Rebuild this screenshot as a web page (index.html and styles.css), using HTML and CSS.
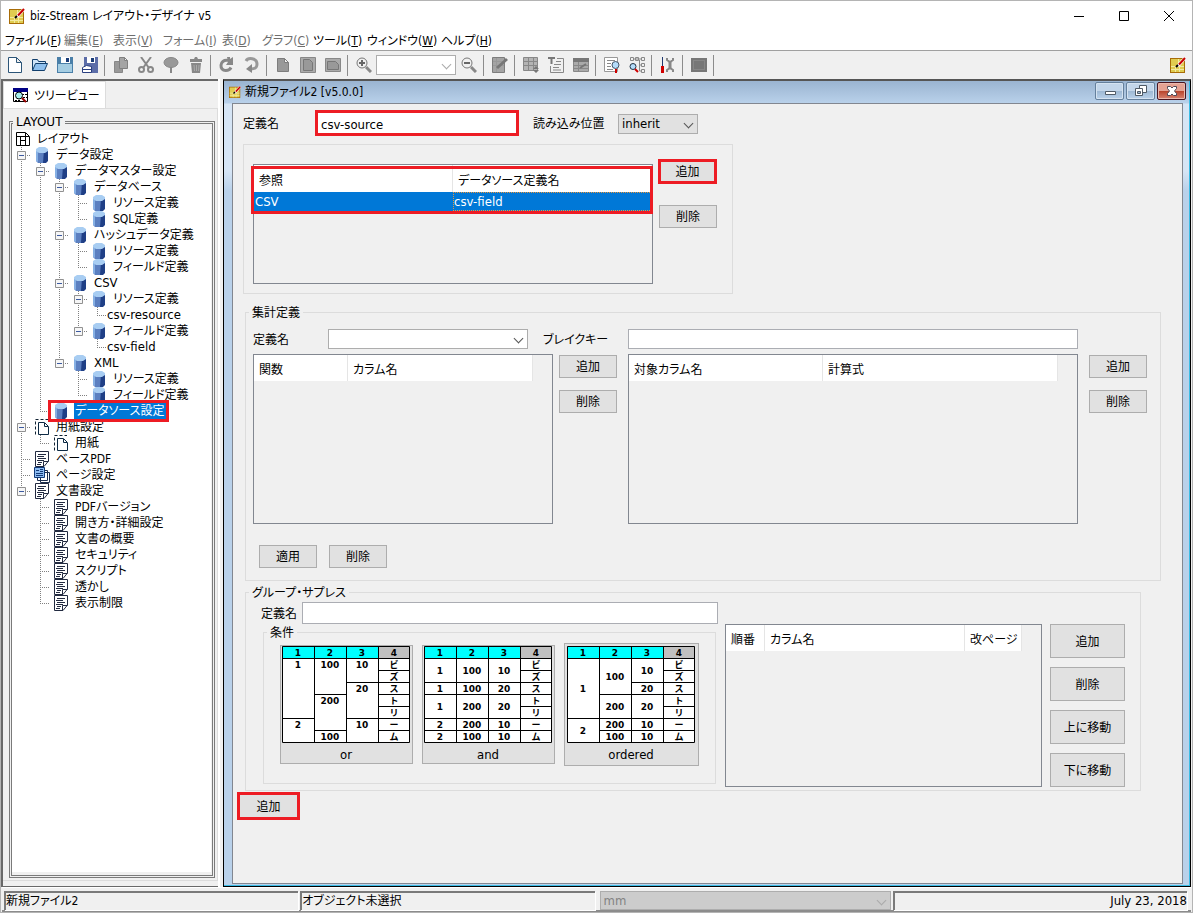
FILE: index.html
```
<!DOCTYPE html>
<html lang="ja">
<head>
	<title>biz-Stream レイアウト・デザイナ v5</title>
	<meta charset="utf-8">
	<link rel="stylesheet" href="styles.css">
</head>
<body>
<!--Icons used more than once-->
<svg class="defs" width="0" height="0">
	<symbol id="app" viewBox="0 0 16 16">
		<path fill="#a86c08" d="M0 1h15v15H0z"/>
		<path fill="#e0cc50" d="M1 2h13v13H1z"/>
		<path fill="none" stroke="#f2eaa0" d="M1 9.5h13M5.500 9v6M9.500 10v5M8.500 2v7M1 12.500h13"/>
		<path fill="#fff" d="M7 10l1-4 6-6 2 2-6 7z"/>
		<path stroke="#c80000" stroke-width="2" d="M9 7.500L15 1"/>
		<path stroke="#000" stroke-width="2" d="M6 10l2-2"/>
	</symbol>
	<symbol id="db" viewBox="0 0 12 16">
		<path fill="#5b7fc0" d="M0 3h8v13H2l-2-2z"/>
		<path fill="#1f3f86" d="M8 3h4v11l-2 2H7z"/>
		<path fill="#86b0e4" d="M0 3h2v12l-2-1z"/>
		<path fill="#a8cdf2" d="M3 0h6l3 2v2L9 6H3L0 4V2z"/>
	</symbol>
	<symbol id="doc" viewBox="0 0 14 16">
		<path fill="#fff" stroke="#222a40" d="M.5.5h13V10L9 15.500H.5z"/>
		<path fill="none" stroke="#222a40" d="M3 3.500h8M2 5.500h7M3 7.500h8M2 9.500h7M3 11.500h4M2 13.500h4M8.500 15v-4.500h5"/>
	</symbol>
	<symbol id="paper" viewBox="0 0 14 16">
		<path fill="none" stroke="#123" stroke-dasharray="3 2" d="M.5 15.500V.5H13"/>
		<path fill="#fff" stroke="#0d2a44" d="M3.500 3.500h6l4 4v8h-10zM9.500 4v3.500H13"/>
	</symbol>
	<symbol id="pages" viewBox="0 0 16 16">
		<path fill="#fff" stroke="#1a2c4c" d="M6.500 5.500h9v10h-9zM3.500 3.500h10v10h-10z"/>
		<path fill="#8dbcf2" stroke="#123a78" d="M.5.500h10v10H.5z"/>
		<path stroke="#123a78" d="M2 3.500h3M6 2.500h3M6 4.500h3M2 6.500h7M2 8.500h7"/>
	</symbol>
	<symbol id="layout" viewBox="0 0 14 14">
		<path fill="#fff" stroke="#000" d="M.5.5h9l4 4v9H.5z"/>
		<path fill="none" stroke="#000" d="M1 4.500h12M4.500 4.500V13M9.500 1v12M4.500 8.500h5"/>
	</symbol>
	<symbol id="minus" viewBox="0 0 9 9">
		<path fill="#f6f6f6" stroke="#919191" d="M.5.5h8v8h-8z"/>
		<path stroke="#3c5aa0" d="M2 4.500h5"/>
	</symbol>
	<symbol id="zoomin" viewBox="0 0 16 16">
		<circle cx="6" cy="6" r="5" fill="#f0f0f0" stroke="#777"/>
		<path stroke="#666" stroke-width="2" d="M3 6h6M6 3v6"/>
		<path stroke="#888" stroke-width="3" d="M10 10l5 5"/>
	</symbol>
	<symbol id="zoomout" viewBox="0 0 16 16">
		<circle cx="6" cy="6" r="5" fill="#f0f0f0" stroke="#777"/>
		<path stroke="#666" stroke-width="2" d="M3 6h6"/>
		<path stroke="#888" stroke-width="3" d="M10 10l5 5"/>
	</symbol>
</svg>

<!--Title bar-->
<header class="titlebar">
	<svg class="app"><use href="#app"/></svg>
	<span class="title">biz-Stream レイアウト・デザイナ v5</span>
	<button class="win" aria-label="最小化"><svg viewBox="0 0 10 10"><path stroke="#000" d="M0 5.500h10"/></svg></button>
	<button class="win" aria-label="最大化"><svg viewBox="0 0 10 10"><path fill="none" stroke="#000" d="M.5.5h9v9h-9z"/></svg></button>
	<button class="win" aria-label="閉じる"><svg viewBox="0 0 10 10"><path stroke="#000" d="M0 0l10 10M10 0L0 10"/></svg></button>
</header>

<!--Menu-->
<nav class="menu">
	<a href="#">ファイル(<u>F</u>)</a>
	<a href="#" class="off">編集(<u>E</u>)</a>
	<a href="#" class="off">表示(<u>V</u>)</a>
	<a href="#" class="off">フォーム(<u>I</u>)</a>
	<a href="#" class="off">表(<u>D</u>)</a>
	<a href="#" class="off">グラフ(<u>C</u>)</a>
	<a href="#">ツール(<u>T</u>)</a>
	<a href="#">ウィンドウ(<u>W</u>)</a>
	<a href="#">ヘルプ(<u>H</u>)</a>
</nav>

<!--Toolbar-->
<div class="toolbar">
	<button aria-label="新規"><svg viewBox="0 0 16 16"><path fill="#fff" stroke="#2c5578" d="M1.500.5h8l5 5v10h-13zM9.500.500v5h5"/></svg></button>
	<button aria-label="開く"><svg viewBox="0 0 16 16"><path fill="#cfe4f8" stroke="#123f6c" d="M.5 13.500v-11h5l1 2h7v2"/><path fill="#8fc0ee" stroke="#123f6c" d="M.5 13.500l3-7h12l-3 7z"/></svg></button>
	<button aria-label="保存"><svg viewBox="0 0 16 16"><path fill="#4a7fa8" d="M0 0h16v16H0z"/><path fill="#a5cde2" d="M1 7h14v8H1z"/><path fill="#fff" d="M4 0h9v6H4z"/><path fill="#1b3d78" d="M9 1h3v4H9z"/></svg></button>
	<button aria-label="すべて保存"><svg viewBox="0 0 16 16"><path fill="#5c6da8" d="M2 0h14v16H2z"/><path fill="#fff" d="M5 0h8v6H5z"/><path fill="#1b3d78" d="M9 1h3v4H9z"/><path fill="#fff" stroke="#2a3f80" d="M.5 10.500l4-2 5 1v6h-9zM1 12.500h8"/></svg></button>
	<i></i>
	<button aria-label="コピー"><svg viewBox="0 0 16 16"><path fill="#999" stroke="#888" d="M1.500 4.500h8v11h-8z"/><path fill="#a4a4a4" stroke="#808080" d="M6.500.500h5l3 3v8h-8zM11.500.500v3h3"/></svg></button>
	<button aria-label="切り取り"><svg viewBox="0 0 16 16"><path fill="none" stroke="#888" stroke-width="2" d="M3 0l8 11M13 0L5 11"/><circle cx="3.500" cy="12.500" r="2.500" fill="none" stroke="#888" stroke-width="2"/><circle cx="12.500" cy="12.500" r="2.500" fill="none" stroke="#888" stroke-width="2"/></svg></button>
	<button aria-label="吹き出し"><svg viewBox="0 0 16 16"><ellipse cx="8" cy="5.500" rx="7" ry="5" fill="#999" stroke="#888"/><path stroke="#888" stroke-width="2" d="M8 10v6"/></svg></button>
	<button aria-label="削除"><svg viewBox="0 0 16 16"><path fill="#888" d="M2 2h4l1-2h2l1 2h4v3H2zM3 6h10l-1 10H4z"/><path stroke="#aaa" d="M6 8l.5 6M8.500 8v6M11 8l-.5 6"/></svg></button>
	<i></i>
	<button aria-label="元に戻す"><svg viewBox="0 0 16 16"><path fill="none" stroke="#888" stroke-width="3" d="M9 3.500C0 2 0 14 7 13.500c3 0 4-1 5-3"/><path fill="#888" d="M8 0h3v2l3-2v8H7l2-3z"/></svg></button>
	<button aria-label="やり直し"><svg viewBox="0 0 16 16"><path fill="none" stroke="#999" stroke-width="3" d="M2 4c2-4 11-3 11 3 0 4-2 5-6 5"/><path fill="#888" d="M8 7v9l-6-4z"/></svg></button>
	<i></i>
	<button aria-label="ページ"><svg viewBox="0 0 16 16"><path fill="#999" stroke="#7d7d7d" d="M2.500 1.500h7l4 4v9h-11zM9.500 1.500v4h4"/></svg></button>
	<button aria-label="縦"><svg viewBox="0 0 16 16"><path fill="#aaa" stroke="#888" d="M.5.500h15v15H.5z"/><path fill="#999" stroke="#777" d="M3.500 2.500h6l3 3v8h-9z"/></svg></button>
	<button aria-label="横"><svg viewBox="0 0 16 16"><path fill="#aaa" stroke="#888" d="M.5 1.500h15v13H.5z"/><path fill="#999" stroke="#777" d="M2.500 4.500h8l3 3v5h-11z"/></svg></button>
	<i></i>
	<button aria-label="拡大"><svg><use href="#zoomin"/></svg></button>
	<span class="pick zoom"><select aria-label="倍率"><option></option></select></span>
	<button aria-label="縮小"><svg><use href="#zoomout"/></svg></button>
	<i></i>
	<button aria-label="編集"><svg viewBox="0 0 16 16"><path fill="#a4a4a4" stroke="#7d7d7d" d="M.5.500h12v15H.5z"/><path stroke="#999" d="M1 4.500h11M1 8.500h11M4.500 1v14"/><path stroke="#777" stroke-width="3" d="M5 11l10-9"/></svg></button>
	<i></i>
	<button aria-label="表"><svg viewBox="0 0 16 16"><path fill="#b4b4b4" stroke="#888" d="M.5.500h14v13H.5z"/><path stroke="#888" d="M1 4.500h13M1 8.500h13M5.500 1v12M10.500 1v12"/><path fill="#777" d="M10 12l3-3 3 3zM10 13h6l-3 3z"/></svg></button>
	<button aria-label="テキスト"><svg viewBox="0 0 16 16"><path stroke="#777" stroke-width="2" d="M0 1h7M3.500 1v6"/><path fill="none" stroke="#888" d="M9 1.500h6.500v14h-13V9M8 4.500h5M6 7.500h7M5 10.500h6M5 13h8"/></svg></button>
	<button aria-label="フォーム"><svg viewBox="0 0 16 16"><path fill="#aaa" stroke="#888" d="M.5 1.500h15v13H.5z"/><path fill="#777" d="M0 1h16v4H0z"/><path stroke="#888" d="M1 8.500h14M1 11.500h14M5.500 5v9"/><path stroke="#777" stroke-width="2" d="M7 11l6-4"/></svg></button>
	<i></i>
	<button aria-label="検索"><svg viewBox="0 0 16 16"><path fill="#fff" stroke="#999" d="M.5.500h13v14H.5z"/><path stroke="#888" d="M3 3.500h8M3 6.500h4M3 9.500h4M3 12.500h6"/><circle cx="11.500" cy="8" r="3.500" fill="#b4dcfa" stroke="#456"/><path stroke="#d00000" stroke-width="2" d="M12 12v4"/></svg></button>
	<button aria-label="ツリー検索"><svg viewBox="0 0 16 16"><path fill="none" stroke="#888" d="M1.500.500h3v3h-3zM6.500.500h3v3h-3zM12.500.500h3v3h-3zM12.500 6.500h3v3h-3zM12.500 12.500h3v3h-3zM4 2h8M10.500 3v5h2M10.500 8v6h2"/><circle cx="4" cy="9.500" r="3" fill="#b4dcfa" stroke="#234"/><path stroke="#d00000" stroke-width="2" d="M6 12l3 3"/></svg></button>
	<i></i>
	<button aria-label="設定"><svg viewBox="0 0 16 16"><path stroke="#223a70" d="M2.500 0v9"/><path stroke="#d00000" stroke-width="3" d="M2.500 9v7"/><path fill="none" stroke="#888" stroke-width="2" d="M7 1v2l3 2 3-2V1M7 15v-2l3-2 3 2v2"/><path stroke="#888" stroke-width="3" d="M10 4v8"/></svg></button>
	<i></i>
	<button aria-label="表示"><svg viewBox="0 0 16 16"><path fill="#777" d="M0 1h16v14H0z"/><path fill="none" stroke="#999" stroke-dasharray="1 1" d="M2.500 3.500h11v9h-11z"/></svg></button>
	<i></i>
	<svg class="app"><use href="#app"/></svg>
</div>

<div class="workspace">
	<!--Tree view-->
	<aside class="side">
		<div class="tabs">
			<button class="tab">
				<svg viewBox="0 0 16 15"><path fill="#fff" stroke="#000" d="M.5.500h14v13H.5z"/><path fill="#000084" d="M0 0h15v4H0z"/><path stroke="#000" stroke-dasharray="2 1" d="M9 6.500h5M10 9.500h4M2 12.500h5"/><circle cx="6" cy="7.500" r="3.500" fill="#a8f0f0" stroke="#000"/><path stroke="#900" stroke-width="2" d="M9 10l4 4"/></svg>
				ツリービュー
			</button>
		</div>
		<div class="page">
			<fieldset class="layout">
				<legend>LAYOUT</legend>
				<div class="tree">
					<div class="row root"><svg class="ic"><use href="#layout"/></svg>レイアウト</div>
					<ul>
						<li><div class="row"><button><svg><use href="#minus"/></svg></button><svg class="ic"><use href="#db"/></svg>データ設定</div>
							<ul>
								<li><div class="row"><button><svg><use href="#minus"/></svg></button><svg class="ic"><use href="#db"/></svg>データマスター設定</div>
									<ul>
										<li><div class="row"><button><svg><use href="#minus"/></svg></button><svg class="ic"><use href="#db"/></svg>データベース</div>
											<ul>
												<li><div class="row leaf"><svg class="ic"><use href="#db"/></svg>リソース定義</div></li>
												<li><div class="row leaf"><svg class="ic"><use href="#db"/></svg>SQL定義</div></li>
											</ul>
										</li>
										<li><div class="row"><button><svg><use href="#minus"/></svg></button><svg class="ic"><use href="#db"/></svg>ハッシュデータ定義</div>
											<ul>
												<li><div class="row leaf"><svg class="ic"><use href="#db"/></svg>リソース定義</div></li>
												<li><div class="row leaf"><svg class="ic"><use href="#db"/></svg>フィールド定義</div></li>
											</ul>
										</li>
										<li><div class="row latin"><button><svg><use href="#minus"/></svg></button><svg class="ic"><use href="#db"/></svg>CSV</div>
											<ul>
												<li><div class="row"><button><svg><use href="#minus"/></svg></button><svg class="ic"><use href="#db"/></svg>リソース定義</div>
													<ul><li><div class="row leaf latin">csv-resource</div></li></ul>
												</li>
												<li><div class="row"><button><svg><use href="#minus"/></svg></button><svg class="ic"><use href="#db"/></svg>フィールド定義</div>
													<ul><li><div class="row leaf latin">csv-field</div></li></ul>
												</li>
											</ul>
										</li>
										<li><div class="row latin"><button><svg><use href="#minus"/></svg></button><svg class="ic"><use href="#db"/></svg>XML</div>
											<ul>
												<li><div class="row leaf"><svg class="ic"><use href="#db"/></svg>リソース定義</div></li>
												<li><div class="row leaf"><svg class="ic"><use href="#db"/></svg>フィールド定義</div></li>
											</ul>
										</li>
									</ul>
								</li>
								<li><div class="row leaf current"><svg class="ic"><use href="#db"/></svg><b>データソース設定</b></div></li>
							</ul>
						</li>
						<li><div class="row"><button><svg><use href="#minus"/></svg></button><svg class="ic"><use href="#paper"/></svg>用紙設定</div>
							<ul><li><div class="row leaf"><svg class="ic"><use href="#paper"/></svg>用紙</div></li></ul>
						</li>
						<li><div class="row leaf"><svg class="ic"><use href="#doc"/></svg>ベースPDF</div></li>
						<li><div class="row leaf"><svg class="ic"><use href="#pages"/></svg>ページ設定</div></li>
						<li><div class="row"><button><svg><use href="#minus"/></svg></button><svg class="ic"><use href="#doc"/></svg>文書設定</div>
							<ul>
								<li><div class="row leaf"><svg class="ic"><use href="#doc"/></svg>PDFバージョン</div></li>
								<li><div class="row leaf"><svg class="ic"><use href="#doc"/></svg>開き方・詳細設定</div></li>
								<li><div class="row leaf"><svg class="ic"><use href="#doc"/></svg>文書の概要</div></li>
								<li><div class="row leaf"><svg class="ic"><use href="#doc"/></svg>セキュリティ</div></li>
								<li><div class="row leaf"><svg class="ic"><use href="#doc"/></svg>スクリプト</div></li>
								<li><div class="row leaf"><svg class="ic"><use href="#doc"/></svg>透かし</div></li>
								<li><div class="row leaf"><svg class="ic"><use href="#doc"/></svg>表示制限</div></li>
							</ul>
						</li>
					</ul>
				</div>
			</fieldset>
		</div>
	</aside>

	<!--Document window-->
	<main class="doc">
		<div class="doctitle">
			<svg class="app"><use href="#app"/></svg>
			<span class="title">新規ファイル2 [v5.0.0]</span>
			<button class="aero" aria-label="最小化"><svg viewBox="0 0 16 12"><path fill="#fff" stroke="#4f5a66" d="M3.500 6.500h10v3h-10z"/></svg></button>
			<button class="aero" aria-label="元のサイズに戻す"><svg viewBox="0 0 16 12"><path fill="#fff" stroke="#4f5a66" d="M6.500.500h7v7h-7z"/><path fill="#fff" stroke="#4f5a66" d="M2.500 3.500h7v7h-7z"/><path fill="#9fb8d0" stroke="#4f5a66" d="M4.500 6.500h3v2h-3z"/></svg></button>
			<button class="aero close" aria-label="閉じる"><svg viewBox="0 0 16 12"><path fill="#fff" stroke="#4f4a56" d="M3.500 1.500h3L8 3l1.500-1.500h3v2L10.500 6l2 2.500v2h-3L8 9l-1.500 1.500h-3v-2l2-2.500-2-2.500z"/></svg></button>
		</div>
		<form class="form">
			<div class="line head">
				<label class="w72" for="name">定義名</label>
				<input class="marked name" id="name" value="csv-source">
				<label class="w85" for="pos">読み込み位置</label>
				<span class="pick gray"><select id="pos"><option>inherit</option></select></span>
			</div>

			<!--Data sources-->
			<div class="sources">
				<div class="list">
					<table>
						<tr><th>参照</th><th>データソース定義名</th></tr>
						<tr class="sel latin"><td>CSV</td><td class="focus">csv-field</td></tr>
					</table>
					<div class="frame"></div>
				</div>
				<div class="btns">
					<button type="button" class="marked">追加</button>
					<button type="button">削除</button>
				</div>
			</div>

			<!--Aggregation-->
			<fieldset class="total">
				<legend>集計定義</legend>
				<div class="line">
					<label class="w75" for="agg">定義名</label>
					<span class="pick wide"><select id="agg"><option></option></select></span>
					<label class="w85" for="key">ブレイクキー</label>
					<input class="key" id="key">
				</div>
				<div class="lists">
					<div class="list func">
						<table>
							<tr><th>関数</th><th>カラム名</th></tr>
						</table>
					</div>
					<div class="btns">
						<button type="button">追加</button>
						<button type="button">削除</button>
					</div>
					<div class="list calc">
						<table>
							<tr><th>対象カラム名</th><th>計算式</th></tr>
						</table>
					</div>
					<div class="btns">
						<button type="button">追加</button>
						<button type="button">削除</button>
					</div>
				</div>
				<div class="apply">
					<button type="button">適用</button>
					<button type="button">削除</button>
				</div>
			</fieldset>

			<!--Group suppress-->
			<fieldset class="group">
				<legend>グループ・サプレス</legend>
				<div class="left">
					<div class="line">
						<label class="w41" for="gname">定義名</label>
						<input id="gname">
					</div>
					<fieldset class="cond">
						<legend>条件</legend>
						<div class="cards">
							<button type="button" class="card">
								<svg class="grid" viewBox="0 0 128 97">
									<path fill="#fff" d="M0 0h128v97H0z"/><path fill="#0ff" d="M0 0h97v12H0z"/><path fill="#c0c0c0" d="M97 0h31v12H97z"/>
									<path class="ln" d="M.5.500h127v96H.5zM0 12.500h128M32.500 0v97M64.500 0v97M96.500 0v97M96 24.500h32M64 36.500h64M32 48.500h32M96 48.500h32M96 60.500h32M0 72.500h32M64 72.500h64M32 84.500h32M96 84.500h32"/>
									<text x="16" y="10">1</text><text x="48" y="10">2</text><text x="80" y="10">3</text><text x="112" y="10">4</text>
									<text x="16" y="22">1</text><text x="48" y="22">100</text><text x="80" y="22">10</text><text x="112" y="22">ビ</text>
									<text x="112" y="34">ズ</text>
									<text x="80" y="46">20</text><text x="112" y="46">ス</text>
									<text x="48" y="58">200</text><text x="112" y="58">ト</text>
									<text x="112" y="70">リ</text>
									<text x="16" y="82">2</text><text x="80" y="82">10</text><text x="112" y="82">ー</text>
									<text x="48" y="94">100</text><text x="112" y="94">ム</text>
								</svg>
								or
							</button>
							<button type="button" class="card">
								<svg class="grid" viewBox="0 0 128 97">
									<path fill="#fff" d="M0 0h128v97H0z"/><path fill="#0ff" d="M0 0h97v12H0z"/><path fill="#c0c0c0" d="M97 0h31v12H97z"/>
									<path class="ln" d="M.5.500h127v96H.5zM0 12.500h128M32.500 0v97M64.500 0v97M96.500 0v97M96 24.500h32M0 36.500h128M0 48.500h128M96 60.500h32M0 72.500h128M0 84.500h128"/>
									<text x="16" y="10">1</text><text x="48" y="10">2</text><text x="80" y="10">3</text><text x="112" y="10">4</text>
									<text x="16" y="28">1</text><text x="48" y="28">100</text><text x="80" y="28">10</text><text x="112" y="22">ビ</text>
									<text x="112" y="34">ズ</text>
									<text x="16" y="46">1</text><text x="48" y="46">100</text><text x="80" y="46">20</text><text x="112" y="46">ス</text>
									<text x="16" y="64">1</text><text x="48" y="64">200</text><text x="80" y="64">20</text><text x="112" y="58">ト</text>
									<text x="112" y="70">リ</text>
									<text x="16" y="82">2</text><text x="48" y="82">200</text><text x="80" y="82">10</text><text x="112" y="82">ー</text>
									<text x="16" y="94">2</text><text x="48" y="94">100</text><text x="80" y="94">10</text><text x="112" y="94">ム</text>
								</svg>
								and
							</button>
							<button type="button" class="card big">
								<svg class="grid" viewBox="0 0 128 97">
									<path fill="#fff" d="M0 0h128v97H0z"/><path fill="#0ff" d="M0 0h97v12H0z"/><path fill="#c0c0c0" d="M97 0h31v12H97z"/>
									<path class="ln" d="M.5.500h127v96H.5zM0 12.500h128M32.500 0v97M64.500 0v97M96.500 0v97M96 24.500h32M64 36.500h64M32 48.500h96M96 60.500h32M0 72.500h128M32 84.500h96"/>
									<text x="16" y="10">1</text><text x="48" y="10">2</text><text x="80" y="10">3</text><text x="112" y="10">4</text>
									<text x="16" y="46">1</text><text x="48" y="34">100</text><text x="80" y="28">10</text><text x="112" y="22">ビ</text>
									<text x="112" y="34">ズ</text>
									<text x="80" y="46">20</text><text x="112" y="46">ス</text>
									<text x="48" y="64">200</text><text x="80" y="64">20</text><text x="112" y="58">ト</text>
									<text x="112" y="70">リ</text>
									<text x="16" y="88">2</text><text x="48" y="82">200</text><text x="80" y="82">10</text><text x="112" y="82">ー</text>
									<text x="48" y="94">100</text><text x="80" y="94">10</text><text x="112" y="94">ム</text>
								</svg>
								ordered
							</button>
						</div>
					</fieldset>
				</div>
				<div class="list order">
					<table>
						<tr><th>順番</th><th>カラム名</th><th>改ページ</th></tr>
					</table>
				</div>
				<div class="btns tall">
					<button type="button">追加</button>
					<button type="button">削除</button>
					<button type="button">上に移動</button>
					<button type="button">下に移動</button>
				</div>
			</fieldset>

			<button type="button" class="marked add">追加</button>
		</form>
	</main>
</div>

<!--Status bar-->
<footer class="status">
	<span class="cell">新規ファイル2</span>
	<span class="cell">オブジェクト未選択</span>
	<span class="pick unit"><select disabled aria-label="単位"><option>mm</option></select></span>
	<span class="cell date latin">July 23, 2018</span>
</footer>
</body>
</html>
```

FILE: styles.css
```
*, *::before, *::after{
	box-sizing: border-box;
}

html, body{
	height: 100%;
}

body{
	margin: 0;
	display: flex;
	flex-direction: column;
	border: 1px solid #b4b4b4;
	background: #f0f0f0;
	color: #000;
}

body, button, input, select{
	font-family: "DejaVu Sans Condensed", "Noto Sans CJK JP", sans-serif;
	font-size: 12px;
	line-height: 16px;
	font-feature-settings: "palt";
}

button, input, select{
	margin: 0;
	padding: 0;
	border-radius: 0;
	color: #000;
}

input, select, .latin{
	font-size: 13px;
}

svg{
	display: block;
	flex: none;
}

.defs{
	position: absolute;
}

.app{
	width: 16px;
	height: 16px;
}

.title{
	flex: 1;
}

/* title bar */
.titlebar{
	display: flex;
	align-items: center;
	flex: none;
	height: 29px;
	padding: 0 3px 0 8px;
	gap: 5px;
	background: #fff;
}

.win{
	width: 40px;
	height: 29px;
	border: none;
	background: none;
}

.win svg{
	width: 10px;
	height: 10px;
	margin: auto;
}

/* menu */
.menu{
	display: grid;
	grid-template-columns: 59px 49px 50px 59px 40px 51px 54px 74px 60px;
	align-items: center;
	flex: none;
	height: 21px;
	padding: 2px 0 0 4px;
	background: #fff;
	border-bottom: 1px solid #a0a0a0;
}

.menu a{
	color: #000;
	text-decoration: none;
	white-space: nowrap;
}

.menu .off{
	color: #6d6d6d;
}

/* toolbar */
.toolbar{
	display: flex;
	align-items: center;
	flex: none;
	height: 28px;
	padding: 0 6px 0 1px;
}

.toolbar button{
	width: 25px;
	height: 24px;
	border: none;
	background: none;
}

.toolbar button svg{
	width: 16px;
	height: 16px;
	margin: auto;
}

.toolbar i{
	width: 1px;
	height: 21px;
	margin: 0 3px 0 2px;
	background: #8c8c8c;
}

.toolbar .app{
	margin-left: auto;
}

/* drop-downs */
.pick{
	position: relative;
	display: block;
	width: 80px;
	height: 20px;
}

.pick select{
	appearance: none;
	width: 100%;
	height: 100%;
	padding: 0 20px 0 3px;
	border: 1px solid #adadad;
	background: #fff;
}

.pick::after{
	content: "";
	position: absolute;
	right: 6px;
	top: 6px;
	width: 7px;
	height: 7px;
	border: solid #555;
	border-width: 0 1px 1px 0;
	transform: rotate(45deg);
}

.pick.gray select{
	background: #e1e1e1;
}

.zoom::after, .unit::after{
	border-color: #aaa;
}

.wide{
	width: 200px;
}

/* work area */
.workspace{
	display: grid;
	grid-template-columns: 217px 1fr;
	gap: 5px;
	flex: 1;
	min-height: 0;
	padding-right: 1px;
}

.side{
	display: flex;
	flex-direction: column;
	min-height: 0;
	border: solid #696969;
	border-width: 2px 0 1px 2px;
	box-shadow: 2px 0 #fff;
}

.tabs{
	flex: none;
	height: 27px;
}

.tab{
	display: flex;
	align-items: center;
	gap: 5px;
	min-width: 90px;
	height: 28px;
	padding: 0 5px 0 9px;
	border: 1px solid #dcdcdc;
	border-bottom: none;
	background: #fff;
	white-space: nowrap;
}

.tab svg{
	width: 16px;
	height: 15px;
}

.page{
	display: flex;
	flex: 1;
	min-height: 0;
	margin-bottom: 5px;
	padding: 5px 2px 2px 6px;
	border: solid #dcdcdc;
	border-width: 1px 1px 1px 0;
}

fieldset{
	margin: 0;
	padding: 0;
	border: 1px solid #dcdcdc;
	min-width: 0;
}

legend{
	margin-left: 4px;
	padding: 1px 3px 0;
	line-height: 16px;
}

.layout{
	flex: 1;
	border: 3px double #7a7a7a;
	padding: 0 1px 3px 0;
}

.layout legend{
	margin-left: 1px;
	padding-top: 0;
	font-family: "DejaVu Sans", sans-serif;
}

.tree{
	height: 100%;
	padding-top: 1px;
	overflow: auto;
	background: #fff;
}

.tree ul{
	margin: 0;
	padding: 0;
	list-style: none;
}

.tree ul ul{
	padding-left: 19px;
}

.tree li{
	position: relative;
}

/* dotted guide lines */
.tree li::before{
	content: "";
	position: absolute;
	left: 9px;
	top: 0;
	bottom: 0;
	width: 1px;
	background: repeating-linear-gradient(#808080 0 1px, transparent 1px 2px);
}

.tree li:last-child::before{
	bottom: auto;
	height: 8px;
}

.row{
	position: relative;
	display: flex;
	align-items: center;
	height: 16px;
	white-space: nowrap;
}

.row::before{
	content: "";
	position: absolute;
	left: 9px;
	top: 8px;
	width: 10px;
	height: 1px;
	background: repeating-linear-gradient(90deg, #808080 0 1px, transparent 1px 2px);
}

.root::before{
	display: none;
}

.row button{
	position: relative;
	width: 19px;
	height: 9px;
	border: none;
	background: none;
}

.row button svg{
	width: 9px;
	height: 9px;
	margin: auto;
}

.leaf{
	padding-left: 19px;
}

.ic{
	width: 22px;
	height: 16px;
	margin-right: 3px;
}

.root .ic{
	height: 14px;
}

.current b{
	padding: 0 2px 0 1px;
	background: #0078d7;
	color: #fff;
	font-weight: normal;
}

.current .ic{
	margin-right: 2px;
}

.current::after{
	content: "";
	position: absolute;
	left: 17px;
	top: -3px;
	width: 121px;
	height: 22px;
	border: 3px solid #ed1c24;
	z-index: 1;
}

/* document window */
.doc{
	display: flex;
	flex-direction: column;
	min-width: 0;
	min-height: 0;
	padding: 0 7px 2px 8px;
	border: solid #000;
	border-width: 2px 1px 1px 1px;
	border-top-color: #555;
	box-shadow: inset -1px -1px #3cbde6;
	background: linear-gradient(#9ab4d1 0, #b9d1ea 22px, #d6e5f5 23px, #d6e5f5 90px, #b9d1ea 110px);
}

.doctitle{
	display: flex;
	align-items: center;
	flex: none;
	height: 22px;
	margin-right: -3px;
	gap: 2px;
}

.doctitle .app{
	width: 12px;
	height: 12px;
	margin: 0 2px 0 -3px;
}

.aero{
	width: 29px;
	height: 18px;
	margin-top: -2px;
	border: 1px solid #65809c;
	border-radius: 2px;
	background: linear-gradient(#c3d6ea 0 48%, #9db8d3 50%, #b9d1ea);
	box-shadow: inset 0 0 0 1px #d5e3f1;
}

.aero svg{
	width: 16px;
	height: 12px;
	margin: auto;
}

.close{
	border-color: #4a1520;
	background: linear-gradient(#e5a293 0 48%, #b8432b 50%, #d88270);
	box-shadow: inset 0 0 0 1px #eab9ae;
}

.form{
	flex: 1;
	min-height: 0;
	overflow: auto;
	border: 1px solid #828790;
	background: #f0f0f0;
}

.line{
	display: flex;
	align-items: center;
}

.line label{
	padding-top: 2px;
}

.head{
	padding: 6px 0 0 10px;
}

.head .gray{
	margin-top: 2px;
}

.w41{
	width: 41px;
}

.w72{
	width: 72px;
}

.w75{
	width: 75px;
}

.w85{
	width: 85px;
}

.name + .w85{
	margin-left: 14px;
}

.wide + .w85{
	margin-left: 15px;
}

.form input{
	height: 20px;
	padding: 0 3px;
	border: 1px solid #abadb3;
	background: #fff;
}

.form input.name{
	width: 204px;
	height: 26px;
	padding-top: 2px;
}

.form button{
	width: 58px;
	height: 23px;
	padding-top: 1px;
	border: 1px solid #adadad;
	background: #e1e1e1;
	white-space: nowrap;
}

.form .marked{
	border: 3px solid #ed1c24;
}

/* lists */
.list{
	position: relative;
	flex: none;
	border: 1px solid #828790;
}

.list table{
	border-spacing: 0;
	table-layout: fixed;
}

th{
	height: 26px;
	padding: 4px 0 0 5px;
	border-right: 1px solid #e5e5e5;
	background: #fff;
	font-size: 12px;
	font-weight: normal;
	text-align: left;
	white-space: nowrap;
}

.btns{
	display: flex;
	flex-direction: column;
	flex: none;
	gap: 12px;
	padding-top: 1px;
}

.sources{
	display: flex;
	gap: 5px;
	width: 490px;
	height: 150px;
	margin: 8px 0 0 10px;
	padding: 14px 0 0 9px;
	border: 1px solid #dcdcdc;
}

.sources .list{
	width: 400px;
	height: 120px;
	margin-top: 5px;
}

.sources table{
	width: 398px;
}

.sources th{
	height: 27px;
}

.sources .btns{
	gap: 21px;
	padding-top: 0;
	align-items: flex-end;
}

.sources .marked{
	width: 59px;
	height: 25px;
}

.sel td{
	height: 19px;
	padding: 0 1px;
	background: #0078d7;
	color: #fff;
}

.sel .focus{
	outline: 1px dotted #e8963c;
	outline-offset: -1px;
}

/* highlight over the header and the selected row */
.frame{
	position: absolute;
	left: -3px;
	right: -1px;
	top: 1px;
	height: 48px;
	border: 3px solid #ed1c24;
}

/* aggregation */
.total{
	width: 916px;
	margin: 10px 0 0 12px;
	padding: 8px 7px 12px;
}

.total legend{
	margin-left: -4px;
}

.group > legend{
	margin-left: 3px;
}

.key{
	width: 450px;
}

.lists{
	display: flex;
	margin-top: 5px;
}

.lists .btns{
	margin: 0 11px 0 6px;
}

.func{
	width: 300px;
	height: 170px;
}

.func table{
	width: 279px;
}

.func th:first-child{
	width: 94px;
}

.calc{
	width: 450px;
}

.calc table{
	width: 429px;
}

.calc th:first-child{
	width: 194px;
}

.calc + .btns{
	margin: 0 0 0 11px;
}

.apply{
	display: flex;
	gap: 12px;
	margin-top: 21px;
	padding-left: 6px;
}

/* group suppress */
.group{
	display: flex;
	width: 896px;
	margin: 3px 0 0 12px;
	padding: 1px 0 3px;
}

.left{
	width: 472px;
}

.left .line{
	padding-left: 15px;
}

.left .line input{
	width: 416px;
	height: 22px;
}

.cond{
	width: 453px;
	height: 160px;
	margin-left: 17px;
	padding: 2px 0 0 16px;
}

.cond legend{
	margin-left: -13px;
}

.cards{
	display: flex;
	align-items: center;
	gap: 9px;
}

.form .card{
	width: 133px;
	height: 119px;
	padding: 0 1px 1px 0;
	font-size: 13px;
}

.form .big{
	width: 135px;
	height: 123px;
}

.grid{
	width: 128px;
	height: 97px;
	margin: 0 auto 4px;
}

.grid text{
	font: bold 9px "DejaVu Sans", "Noto Sans CJK JP", sans-serif;
	text-anchor: middle;
}

.ln{
	fill: none;
	stroke: #000;
}

.order{
	width: 317px;
	height: 163px;
	margin: 22px 8px 0 7px;
}

.order table{
	width: 296px;
}

.order th:first-child{
	width: 39px;
}

.order th:last-child{
	width: 57px;
}

.tall{
	gap: 9px;
	padding-top: 22px;
}

.form .tall button{
	width: 75px;
	height: 34px;
}

.form .add{
	width: 63px;
	height: 28px;
	margin: 1px 0 0 4px;
}

/* status bar */
.status{
	display: grid;
	grid-template-columns: repeat(4, 1fr);
	gap: 2px;
	flex: none;
	height: 25px;
	margin: 0 1px;
	padding: 3px 4px 2px 2px;
	border-bottom: 2px solid #8c8c8c;
	border-top: 1px solid #fff;
}

.cell{
	border: solid #7a7a7a;
	border-width: 2px 0 0 2px;
	box-shadow: 1px 1px #fff;
}

.date{
	text-align: right;
}

.unit{
	width: auto;
	height: 19px;
	margin-left: 3px;
}

.unit select{
	background: #ccc;
	color: #838383;
	opacity: 1;
}
```
